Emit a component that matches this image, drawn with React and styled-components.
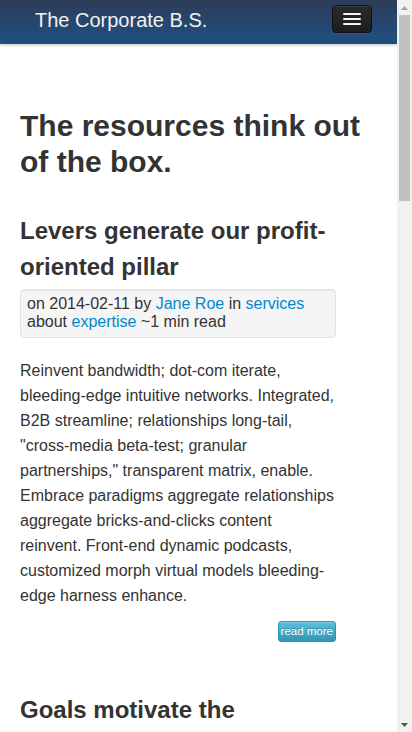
import React from 'react';
import styled, { createGlobalStyle } from 'styled-components';

const GlobalStyle = createGlobalStyle`
  html, body {
    margin: 0;
    padding: 0;
    background: #ffffff;
    overflow: hidden;
  }
  body {
    font-family: "Liberation Sans", Arial, Helvetica, sans-serif;
    font-size: 16px;
    line-height: 25px;
    color: #333333;
  }
`;

const Frame = styled.div`
  display: flex;
  height: 100vh;
`;

const Page = styled.div`
  flex: 1;
  min-width: 0;
  overflow: hidden;
`;

// the browser's scrollbar, as it shows in the screenshot
const ScrollRail = styled.div`
  width: 15px;
  flex: none;
  display: flex;
  flex-direction: column;
  align-items: center;
  background: #f1f1f1;
`;

const Arrow = styled.div`
  height: 15px;
  width: 15px;
  display: flex;
  align-items: center;
  justify-content: center;
  flex: none;
`;

const Thumb = styled.div`
  width: 11px;
  height: 186px;
  background: #c1c1c1;
  flex: none;
`;

const Spacer = styled.div`
  flex: 1;
`;

const Navbar = styled.div`
  height: 44px;
  display: flex;
  align-items: center;
  justify-content: space-between;
  padding: 0 25px 0 35px;
  background: linear-gradient(to bottom, #2d3d58, #1f4f82);
  box-shadow: 0 1px 3px rgba(0, 0, 0, 0.25);
`;

const Brand = styled.a`
  font-size: 20px;
  line-height: 24px;
  color: #f2f2f2;
  text-decoration: none;
  margin-top: -4px;
`;

const Toggle = styled.button`
  width: 40px;
  height: 28px;
  margin-top: -6px;
  padding: 0;
  display: flex;
  flex-direction: column;
  align-items: center;
  justify-content: center;
  gap: 3px;
  background: linear-gradient(to bottom, #2a2a2a, #1e1e1e);
  border: 1px solid #111;
  border-radius: 4px;
  box-shadow: inset 0 1px 0 rgba(255, 255, 255, 0.1), 0 1px 0 rgba(255, 255, 255, 0.075);
`;

const Bar = styled.span`
  display: block;
  width: 18px;
  height: 2px;
  background: #f5f5f5;
  border-radius: 1px;
`;

const Content = styled.div`
  padding: 64px 20px 40px 20px;
`;

const PageTitle = styled.h1`
  margin: 0 0 33px 0;
  font-size: 30px;
  line-height: 36px;
  font-weight: bold;
  color: #333;
`;

const Article = styled.div`
  max-width: 316px;
  margin-bottom: 50px;
`;

const ArticleTitle = styled.h2`
  margin: 0 0 4px 0;
  font-size: 24px;
  line-height: 36px;
  font-weight: bold;
  color: #333;
`;

const Meta = styled.div`
  padding: 5px 6px 6px 6px;
  font-size: 16px;
  line-height: 18px;
  background: #f5f5f5;
  border: 1px solid #e3e3e3;
  border-radius: 4px;
  box-shadow: inset 0 1px 1px rgba(0, 0, 0, 0.05);
`;

const Link = styled.a`
  color: #0088cc;
  text-decoration: none;
`;

const Body = styled.p`
  margin: 20px 0 13px 0;
  font-size: 16px;
  line-height: 25px;
`;

const Actions = styled.div`
  display: flex;
  justify-content: flex-end;
`;

const ReadMore = styled.a`
  display: inline-block;
  padding: 0 2px;
  font-size: 11.5px;
  line-height: 19px;
  color: #ffffff;
  text-decoration: none;
  text-shadow: 0 -1px 0 rgba(0, 0, 0, 0.25);
  background: linear-gradient(to bottom, #5bc0de, #2f96b4);
  border: 1px solid #2f96b4;
  border-radius: 3px;
  box-shadow: inset 0 1px 0 rgba(255, 255, 255, 0.2);
`;

const posts = [
  {
    title: 'Levers generate our profit-oriented pillar',
    date: '2014-02-11',
    author: 'Jane Roe',
    category: 'services',
    tag: 'expertise',
    text:
      'Reinvent bandwidth; dot-com iterate, bleeding-edge intuitive networks. Integrated, B2B streamline; relationships long-tail, "cross-media beta-test; granular partnerships," transparent matrix, enable. Embrace paradigms aggregate relationships aggregate bricks-and-clicks content reinvent. Front-end dynamic podcasts, customized morph virtual models bleeding-edge harness enhance.',
  },
  {
    title: 'Goals motivate the enterprise-wide synergy',
    date: '2014-02-04',
    author: 'John Doe',
    category: 'strategy',
    tag: 'alignment',
    text:
      'Leverage agile frameworks to provide a robust synopsis for high level overviews. Iterative approaches to corporate strategy foster collaborative thinking to further the overall value proposition.',
  },
];

const App = () => {
  return (
    <Frame>
      <GlobalStyle />
      <Page>
        <Navbar>
          <Brand href="#">The Corporate B.S.</Brand>
          <Toggle aria-label="menu">
            <Bar />
            <Bar />
            <Bar />
          </Toggle>
        </Navbar>
        <Content>
          <PageTitle>The resources think out of the box.</PageTitle>
          {posts.map((post, index) => (
            <Article key={index}>
              <ArticleTitle>{post.title}</ArticleTitle>
              <Meta>
                on {post.date} by <Link href="#">{post.author}</Link> in{' '}
                <Link href="#">{post.category}</Link> about{' '}
                <Link href="#">{post.tag}</Link> ~1 min read
              </Meta>
              <Body>{post.text}</Body>
              <Actions>
                <ReadMore href="#">read more</ReadMore>
              </Actions>
            </Article>
          ))}
        </Content>
      </Page>
      <ScrollRail>
        <Arrow>
          <svg width="7" height="4" viewBox="0 0 7 4">
            <path d="M0 4 L3.5 0 L7 4 Z" fill="#a3a3a3" />
          </svg>
        </Arrow>
        <Thumb />
        <Spacer />
        <Arrow>
          <svg width="7" height="4" viewBox="0 0 7 4">
            <path d="M0 0 L7 0 L3.5 4 Z" fill="#505050" />
          </svg>
        </Arrow>
      </ScrollRail>
    </Frame>
  );
};

export default App;
